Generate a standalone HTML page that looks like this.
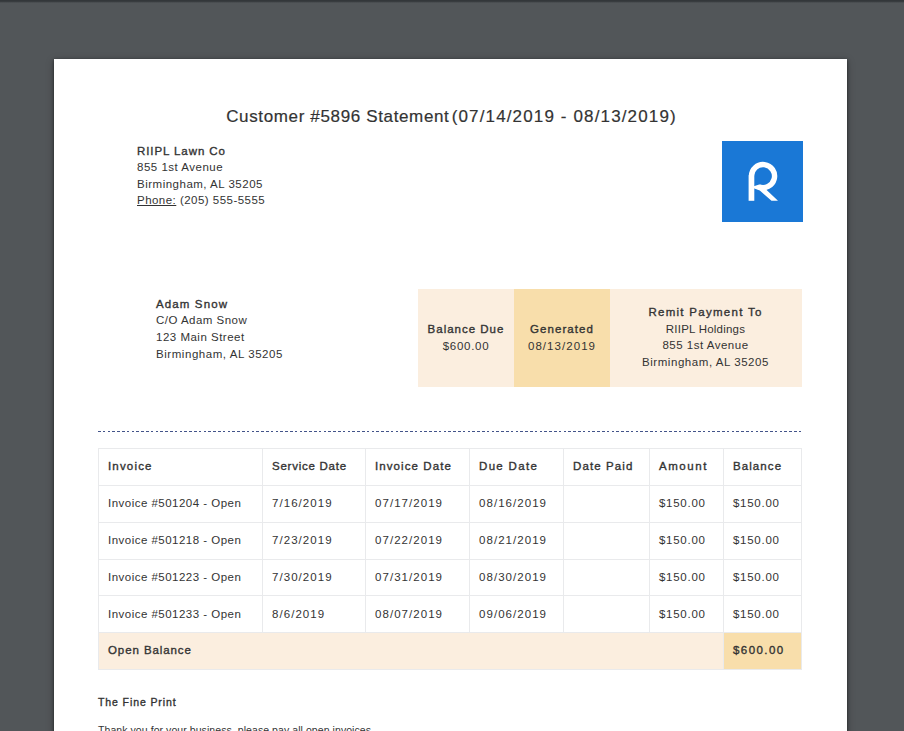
<!DOCTYPE html>
<html>
<head>
<meta charset="utf-8">
<style>
html,body{margin:0;padding:0;}
body{width:904px;height:731px;overflow:hidden;background:#525659;position:relative;font-family:"Liberation Sans",sans-serif;color:#333;}
.topshadow{position:absolute;left:0;top:0;width:904px;height:3px;background:linear-gradient(to bottom,#33373a 0,#33373a 1.2px,#525659 3px);}
.page{position:absolute;left:54px;top:59px;width:793px;height:800px;background:#fff;box-shadow:0 1px 3px rgba(0,0,0,0.55),0 2px 8px rgba(0,0,0,0.25);}
.a{position:absolute;white-space:nowrap;}
.title{left:1px;width:793px;-webkit-text-stroke:0.2px #333;text-align:center;font-size:17px;letter-spacing:0.57px;line-height:20px;}
.t{font-size:11.5px;line-height:16.6px;letter-spacing:0.5px;}
.b{font-weight:normal;-webkit-text-stroke:0.35px #333;}
.d{letter-spacing:1.05px;}
.m{letter-spacing:0.72px;}
.logo{position:absolute;left:668px;top:82px;width:81px;height:81px;background:#1a78d6;}
.bal{position:absolute;left:364px;top:230px;width:384px;height:98px;background:#fbeedf;}
.bal .c{position:absolute;top:0;height:98px;text-align:center;}
.dash{position:absolute;left:44px;top:372px;width:704px;height:1px;background:repeating-linear-gradient(to right,#43548a 0,#43548a 2.6px,transparent 2.6px,transparent 4.8px);}
table{position:absolute;left:44px;top:389px;border-collapse:collapse;table-layout:fixed;width:704px;}
td,th{border:1px solid #e9eaec;height:34px;padding:0 0 2px 9px;text-align:left;font-size:11.5px;letter-spacing:0.5px;white-space:nowrap;line-height:14px;font-weight:normal;}
th{-webkit-text-stroke:0.35px #333;}
tr.ob td{background:#fbeedf;}
tr.r3 td{height:33px;}
tr.r4 td{padding-top:1px;padding-bottom:1px;}
</style>
</head>
<body>
<div class="topshadow"></div>
<div class="page">
  <div class="a title" style="top:48px"><span style="letter-spacing:0.64px">Customer #5896 Statement</span><span style="letter-spacing:0;margin-right:-2.5px"> </span><span style="letter-spacing:1.14px">(07/14/2019 - 08/13/2019)</span></div>

  <div class="a t" style="left:83px;top:83.5px">
    <div class="b" style="letter-spacing:0.92px">RIIPL Lawn Co</div>
    <div>855 1st Avenue</div>
    <div>Birmingham, AL 35205</div>
    <div style="letter-spacing:0.47px"><u>Phone:</u> (205) 555-5555</div>
  </div>

  <div class="logo">
    <svg width="81" height="81" viewBox="0 0 81 81">
      <path d="M29.45 35.1 A11.55 11.55 0 1 1 36.67 45.8" fill="none" stroke="#fff" stroke-width="5.4"/>
      <rect x="26.6" y="34.5" width="5.7" height="25.3" fill="#fff"/>
      <polygon points="31,45.4 37.2,43.6 44.35,48.87 56,59.8 49.5,59.8 37.8,49.6 31,47" fill="#fff"/>
    </svg>
  </div>

  <div class="a t" style="left:102px;top:236.5px;line-height:16.9px">
    <div class="b" style="letter-spacing:1.12px">Adam Snow</div>
    <div style="letter-spacing:0.48px">C/O Adam Snow</div>
    <div>123 Main Street</div>
    <div style="letter-spacing:0.55px">Birmingham, AL 35205</div>
  </div>

  <div class="bal">
    <div class="c t" style="left:0;width:96px;line-height:17px;"><div style="margin-top:31.8px;letter-spacing:1px" class="b">Balance Due</div><div class="m">$600.00</div></div>
    <div class="c t" style="left:96px;width:96px;background:#f8deab;line-height:17px;"><div style="margin-top:31.8px;letter-spacing:1.08px" class="b">Generated</div><div class="d">08/13/2019</div></div>
    <div class="c t" style="left:191.5px;width:192px;line-height:16.7px;"><div style="margin-top:15px;letter-spacing:1.28px" class="b">Remit Payment To</div><div style="letter-spacing:0.22px">RIIPL Holdings</div><div>855 1st Avenue</div><div style="letter-spacing:0.55px">Birmingham, AL 35205</div></div>
  </div>

  <div class="dash"></div>

  <table>
    <colgroup><col style="width:164px"><col style="width:103px"><col style="width:104px"><col style="width:94px"><col style="width:86px"><col style="width:74px"><col style="width:78px"></colgroup>
    <tr><th style="letter-spacing:1.17px">Invoice</th><th style="letter-spacing:0.75px">Service Date</th><th style="letter-spacing:1.09px">Invoice Date</th><th style="letter-spacing:1.33px">Due Date</th><th style="letter-spacing:1.1px">Date Paid</th><th style="letter-spacing:1.54px">Amount</th><th style="letter-spacing:1.08px">Balance</th></tr>
    <tr><td style="letter-spacing:0.48px">Invoice #501204 - Open</td><td class="d">7/16/2019</td><td class="d">07/17/2019</td><td class="d">08/16/2019</td><td></td><td class="m">$150.00</td><td class="m">$150.00</td></tr>
    <tr><td style="letter-spacing:0.48px">Invoice #501218 - Open</td><td class="d">7/23/2019</td><td class="d">07/22/2019</td><td class="d">08/21/2019</td><td></td><td class="m">$150.00</td><td class="m">$150.00</td></tr>
    <tr class="r3"><td style="letter-spacing:0.48px">Invoice #501223 - Open</td><td class="d">7/30/2019</td><td class="d">07/31/2019</td><td class="d">08/30/2019</td><td></td><td class="m">$150.00</td><td class="m">$150.00</td></tr>
    <tr class="r4"><td style="letter-spacing:0.48px">Invoice #501233 - Open</td><td class="d">8/6/2019</td><td class="d">08/07/2019</td><td class="d">09/06/2019</td><td></td><td class="m">$150.00</td><td class="m">$150.00</td></tr>
    <tr class="ob"><td colspan="6" class="b" style="letter-spacing:0.91px;padding-bottom:3px;height:33px">Open Balance</td><td class="b" style="background:#f8deab;letter-spacing:1.42px;padding-bottom:3px;height:33px">$600.00</td></tr>
  </table>

  <div class="a b" style="left:44px;top:636px;font-size:10.5px;line-height:14px;letter-spacing:0.9px">The Fine Print</div>
  <div class="a" style="left:44px;top:664px;font-size:10.5px;line-height:14px;letter-spacing:0.07px">Thank you for your business, please pay all open invoices.</div>
</div>
</body>
</html>
